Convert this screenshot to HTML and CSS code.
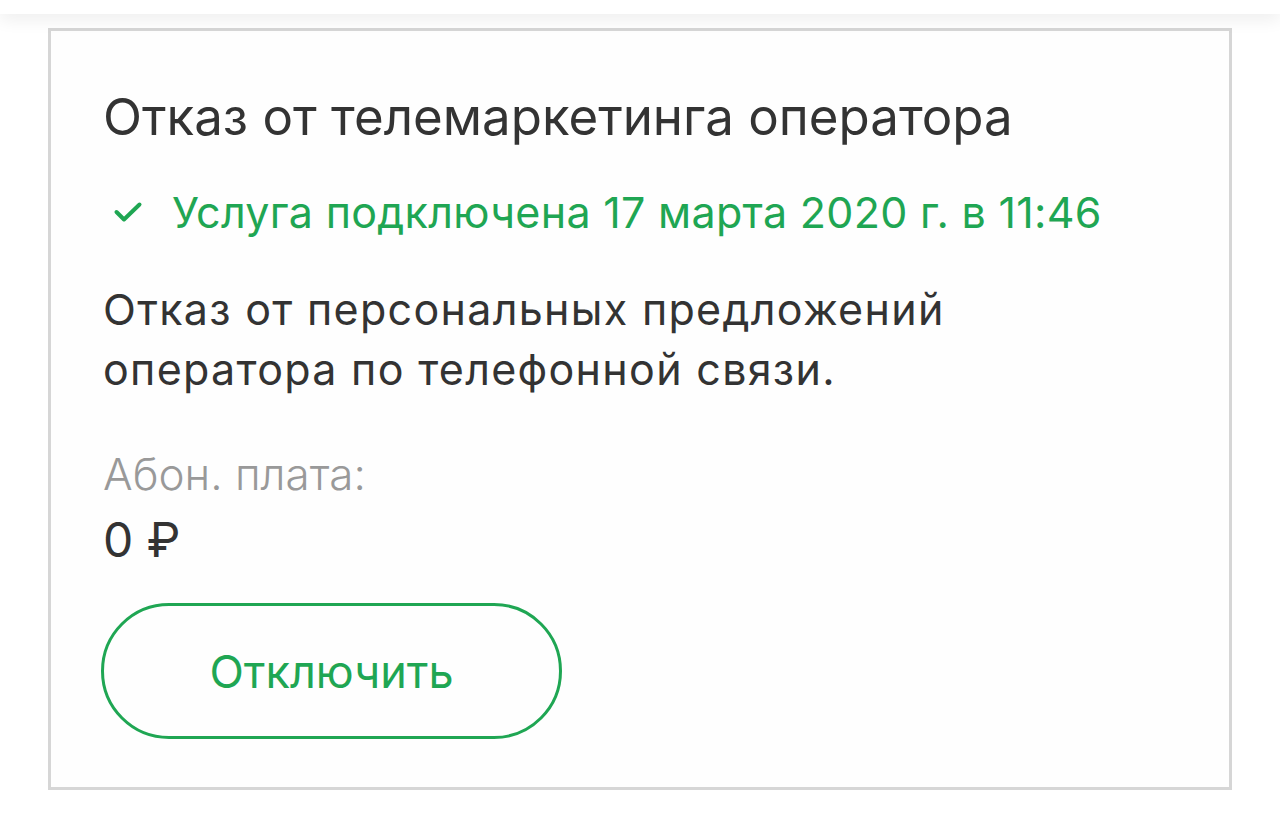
FILE: index.html
```html
<!DOCTYPE html>
<html lang="ru">
<head>
<meta charset="utf-8">
<link rel="stylesheet" href="styles.css">
</head>
<body>
<div class="topbar"></div>
<main class="page">
  <section class="card">
    <h1 class="title">Отказ от телемаркетинга оператора</h1>
    <div class="status">
      <svg class="check" viewBox="0 0 30 24" width="30" height="24"><path d="M3.5 12 L11 19.5 L26.5 4.5" fill="none" stroke="#1fa653" stroke-width="4" stroke-linecap="round" stroke-linejoin="round"/></svg>
      <span>Услуга подключена 17 марта 2020 г. в 11:46</span>
    </div>
    <p class="desc">Отказ от персональных предложений<br>оператора по телефонной связи.</p>
    <div class="fee-label">Абон. плата:</div>
    <div class="fee-value">0 ₽</div>
    <button class="btn">Отключить</button>
  </section>
</main>
</body>
</html>
```
FILE: styles.css
```css
html, body {
  margin: 0;
  padding: 0;
  background: #ffffff;
  font-family: Inter, "Liberation Sans", sans-serif;
}
.topbar {
  height: 14px;
  background: #ffffff;
  box-shadow: 0 4px 18px rgba(0, 0, 0, 0.09);
  position: relative;
  z-index: 1;
}
.page {
  padding: 14px 48px 0 48px;
}
.card {
  box-sizing: border-box;
  width: 1184px;
  height: 762px;
  border: 3px solid #d6d6d6;
  background: #fefefe;
  padding: 0 0 0 52px;
  display: flex;
  flex-direction: column;
  align-items: flex-start;
}
.title {
  margin: 55px 0 0 0;
  font-weight: 400;
  font-size: 51px;
  line-height: 62px;
  color: #333333;
}
.status {
  margin-top: 38px;
  display: flex;
  align-items: center;
  gap: 29px;
  color: #1fa653;
  font-size: 43px;
  line-height: 52px;
  letter-spacing: 0.3px;
  padding-left: 10px;
}
.check { flex: none; }
.desc {
  margin: 41px 0 0 0;
  font-size: 43px;
  line-height: 60px;
  letter-spacing: 1.3px;
  color: #333333;
}
.fee-label {
  margin-top: 48px;
  font-size: 44px;
  font-weight: 300;
  line-height: 54px;
  color: #999999;
}
.fee-value {
  margin-top: 10px;
  font-size: 48px;
  line-height: 58px;
  color: #333333;
}
.btn {
  margin-top: 34px;
  margin-left: -2px;
  box-sizing: border-box;
  width: 461px;
  height: 136px;
  border: 3px solid #1fa653;
  border-radius: 68px;
  background: transparent;
  color: #1fa653;
  font-family: Inter, "Liberation Sans", sans-serif;
  font-size: 45px;
}
```
